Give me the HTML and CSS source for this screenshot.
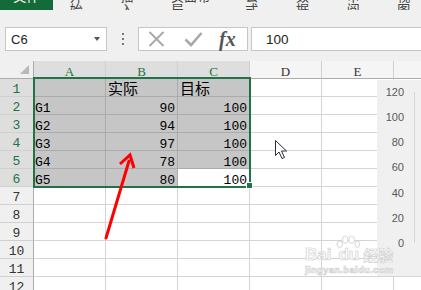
FILE: index.html
```html
<!DOCTYPE html>
<html lang="zh">
<head>
<meta charset="utf-8">
<title>Excel</title>
<link rel="stylesheet" href="styles.css">
</head>
<body>
<div class="tabs">
  <div class="tab tab-file"><span>文件</span></div>
  <div class="tab"><span>开始</span></div>
  <div class="tab"><span>插入</span></div>
  <div class="tab"><span>页面布局</span></div>
  <div class="tab"><span>公式</span></div>
  <div class="tab"><span>数据</span></div>
  <div class="tab"><span>审阅</span></div>
  <div class="tab"><span>视图</span></div>
</div>

<div class="fbar">
  <div class="namebox"><span>C6</span><i class="caret"></i></div>
  <div class="dots"><i></i><i></i><i></i></div>
  <div class="fxbox">
    <svg class="ico-x" width="17" height="16" viewBox="0 0 17 16"><path d="M1.5 1 L15.5 15 M15.5 1 L1.5 15" stroke="#a8a8a8" stroke-width="2" fill="none"/></svg>
    <svg class="ico-ok" width="19" height="16" viewBox="0 0 19 16"><path d="M1.5 8.5 L7 14 L17.5 2" stroke="#a8a8a8" stroke-width="2.6" fill="none"/></svg>
    <span class="fx">fx</span>
  </div>
  <div class="input">100</div>
</div>

<div class="sheet">
  <div class="c corner"><svg width="33" height="17" viewBox="0 0 33 17"><polygon points="29,4 29,13 20,13" fill="#b9b9b9"/></svg></div>
  <div class="c ch sel">A</div><div class="c ch sel">B</div><div class="c ch sel">C</div><div class="c ch">D</div><div class="c ch">E</div><div class="c ch f"></div>

  <div class="c rh sel">1</div><div class="c s"></div><div class="c s cjk">实际</div><div class="c s cjk">目标</div><div class="c"></div><div class="c"></div><div class="c f"></div>
  <div class="c rh sel">2</div><div class="c s">G1</div><div class="c s n">90</div><div class="c s n">100</div><div class="c"></div><div class="c"></div><div class="c f"></div>
  <div class="c rh sel">3</div><div class="c s">G2</div><div class="c s n">94</div><div class="c s n">100</div><div class="c"></div><div class="c"></div><div class="c f"></div>
  <div class="c rh sel">4</div><div class="c s">G3</div><div class="c s n">97</div><div class="c s n">100</div><div class="c"></div><div class="c"></div><div class="c f"></div>
  <div class="c rh sel">5</div><div class="c s">G4</div><div class="c s n">78</div><div class="c s n">100</div><div class="c"></div><div class="c"></div><div class="c f"></div>
  <div class="c rh sel">6</div><div class="c s">G5</div><div class="c s n">80</div><div class="c n">100</div><div class="c"></div><div class="c"></div><div class="c f"></div>
  <div class="c rh">7</div><div class="c"></div><div class="c"></div><div class="c"></div><div class="c"></div><div class="c"></div><div class="c f"></div>
  <div class="c rh">8</div><div class="c"></div><div class="c"></div><div class="c"></div><div class="c"></div><div class="c"></div><div class="c f"></div>
  <div class="c rh">9</div><div class="c"></div><div class="c"></div><div class="c"></div><div class="c"></div><div class="c"></div><div class="c f"></div>
  <div class="c rh">10</div><div class="c"></div><div class="c"></div><div class="c"></div><div class="c"></div><div class="c"></div><div class="c f"></div>
  <div class="c rh">11</div><div class="c"></div><div class="c"></div><div class="c"></div><div class="c"></div><div class="c"></div><div class="c f"></div>
  <div class="c rh">12</div><div class="c"></div><div class="c"></div><div class="c"></div><div class="c"></div><div class="c"></div><div class="c f"></div>

  <div class="selection"></div>
  <div class="handle"></div>

  <div class="chart">
    <div class="labels"><span>120</span><span>100</span><span>80</span><span>60</span><span>40</span><span>20</span><span>0</span></div>
    <div class="axis"></div>
  </div>

  <div class="wm">
    <div class="wm-top"><span>Bai</span><span class="wm-du">du<svg class="paw" width="24" height="13" viewBox="0 0 26 14"><g fill="#fff" stroke="#d2d2d2" stroke-width="1"><ellipse cx="4" cy="10" rx="3" ry="3.5"/><ellipse cx="10" cy="5" rx="3" ry="4"/><ellipse cx="17" cy="5" rx="3" ry="4"/><ellipse cx="23" cy="10" rx="2.5" ry="3.5"/></g></svg></span><span class="wm-cn">经验</span></div>
    <div class="wm-url">jingyan.baidu.com</div>
  </div>
</div>

<svg class="overlay" width="421" height="290" viewBox="0 0 421 290">
  <path d="M106 238 L129 161" stroke="#ff0000" stroke-width="3" fill="none" stroke-linecap="round"/>
  <path d="M120 164 L130 155 L134 168" stroke="#ff0000" stroke-width="3" fill="none" stroke-linejoin="miter"/>
  <path d="M275.5 140.5 L275.5 155.5 L279 152 L282 158.5 L284.5 157.5 L281.5 151 L286.5 151 Z" fill="#fff" stroke="#2b2b3a" stroke-width="1"/>
</svg>
</body>
</html>
```

FILE: styles.css
```css
body {
  margin: 0;
  width: 421px;
  height: 290px;
  overflow: hidden;
  background: #f0f0f0;
  font-family: "Liberation Sans", "Noto Sans CJK SC", sans-serif;
  position: relative;
}

.tabs {
  display: flex;
  gap: 27px;
  height: 10px;
  overflow: hidden;
}
.tab span {
  display: block;
  font: 13px/13px "Noto Sans CJK SC", sans-serif;
  margin-top: -11px;
  color: #444;
}
.tab-file {
  width: 58px;
  margin-right: -10px;
  background: #146b3a;
  display: flex;
  justify-content: center;
}
.tab-file span { color: #fff; }

.fbar {
  display: flex;
  height: 24px;
  margin: 17px 0 0 5px;
}
.namebox {
  width: 102px;
  box-sizing: border-box;
  border: 1px solid #c6c6c6;
  background: #fff;
  display: flex;
  align-items: center;
  padding-left: 5px;
  font-size: 13px;
  color: #222;
}
.caret {
  margin-left: auto;
  margin-right: 6px;
  width: 0;
  height: 0;
  border-left: 3.5px solid transparent;
  border-right: 3.5px solid transparent;
  border-top: 4px solid #555;
}
.dots {
  width: 31px;
  display: flex;
  flex-direction: column;
  align-items: center;
  justify-content: center;
  gap: 3px;
}
.dots i {
  width: 2px;
  height: 2px;
  background: #777;
}
.fxbox {
  width: 110px;
  box-sizing: border-box;
  border: 1px solid #c6c6c6;
  background: #fff;
  display: flex;
  align-items: center;
  padding-left: 9px;
}
.ico-ok { margin-left: 19px; }
.fx {
  margin-left: 16px;
  font: italic bold 20px/20px "Liberation Serif", serif;
  color: #555;
}
.input {
  flex: 1;
  margin-left: 3px;
  box-sizing: border-box;
  border: 1px solid #c6c6c6;
  border-right: none;
  background: #fff;
  display: flex;
  align-items: center;
  padding-left: 14px;
  font-size: 13.5px;
  color: #222;
}

.sheet {
  margin-top: 10px;
  display: grid;
  grid-template-columns: 34px repeat(5, 72px) 1fr;
  grid-auto-rows: 18px;
  background: #fff;
  position: relative;
}
.c {
  box-sizing: border-box;
  border-right: 1px solid #d4d4d4;
  border-bottom: 1px solid #d4d4d4;
  font: 13px/13px "Liberation Mono", "Noto Sans CJK SC", monospace;
  padding: 5px 2px 0 1px;
  white-space: nowrap;
  overflow: hidden;
  color: #000;
}
.c.f { border-right: none; }
.corner {
  background: #f0f0f0;
  border-right-color: #ababab;
  border-bottom-color: #ababab;
  padding: 0;
}
.corner svg { display: block; }
.ch {
  background: #f5f5f5;
  text-align: center;
  border-right-color: #d0d0d0;
  border-bottom-color: #ababab;
  color: #333;
  padding: 4px 0 0;
  font-family: "Liberation Serif", serif;
}
.rh {
  background: #f0f0f0;
  text-align: center;
  border-right-color: #ababab;
  border-bottom-color: #d0d0d0;
  color: #333;
  padding: 4px 0 0;
}
.ch.sel, .rh.sel {
  background: #dedede;
  color: #217346;
}
.s {
  background: #c6c6c6;
  border-color: #ababab;
}
.n { text-align: right; }
.cjk {
  font: 15px/17px "Noto Sans CJK SC", sans-serif;
  padding: 0 0 0 2px;
}

.selection {
  position: absolute;
  left: 33px;
  top: 16px;
  width: 218px;
  height: 111px;
  box-sizing: border-box;
  border: 2px solid #217346;
}
.handle {
  position: absolute;
  left: 246px;
  top: 121px;
  width: 5px;
  height: 5px;
  background: #217346;
  border: 1px solid #fff;
}

.chart {
  position: absolute;
  left: 377px;
  top: 19px;
  width: 44px;
  height: 196px;
  background: #f0f0f0;
  display: flex;
}
.labels {
  width: 27px;
  height: 169px;
  box-sizing: border-box;
  padding-top: 6px;
  display: flex;
  flex-direction: column;
  justify-content: space-between;
  align-items: flex-end;
  font: 11px/12px "Liberation Sans", sans-serif;
  color: #595959;
}
.axis {
  width: 1px;
  height: 151px;
  margin: 12px 0 0 10px;
  background: #d6d6d6;
}

.wm {
  position: absolute;
  left: 305px;
  top: 184px;
  color: #fff;
  -webkit-text-stroke: 0.7px #d0d0d0;
  font-family: "Liberation Sans", "Noto Sans CJK SC", sans-serif;
  font-weight: bold;
  white-space: nowrap;
}
.wm-top {
  display: flex;
  align-items: flex-end;
  font-size: 17px;
  line-height: 19px;
}
.wm-du {
  position: relative;
  margin-left: 7px;
}
.paw {
  position: absolute;
  left: -2px;
  top: -10px;
}
.wm-cn {
  font: bold 15px/19px "Noto Sans CJK SC", sans-serif;
  margin-left: 4px;
}
.wm-url {
  font-size: 9.5px;
  line-height: 11px;
  letter-spacing: 0.3px;
}

.overlay {
  position: absolute;
  left: 0;
  top: 0;
  pointer-events: none;
}
```
